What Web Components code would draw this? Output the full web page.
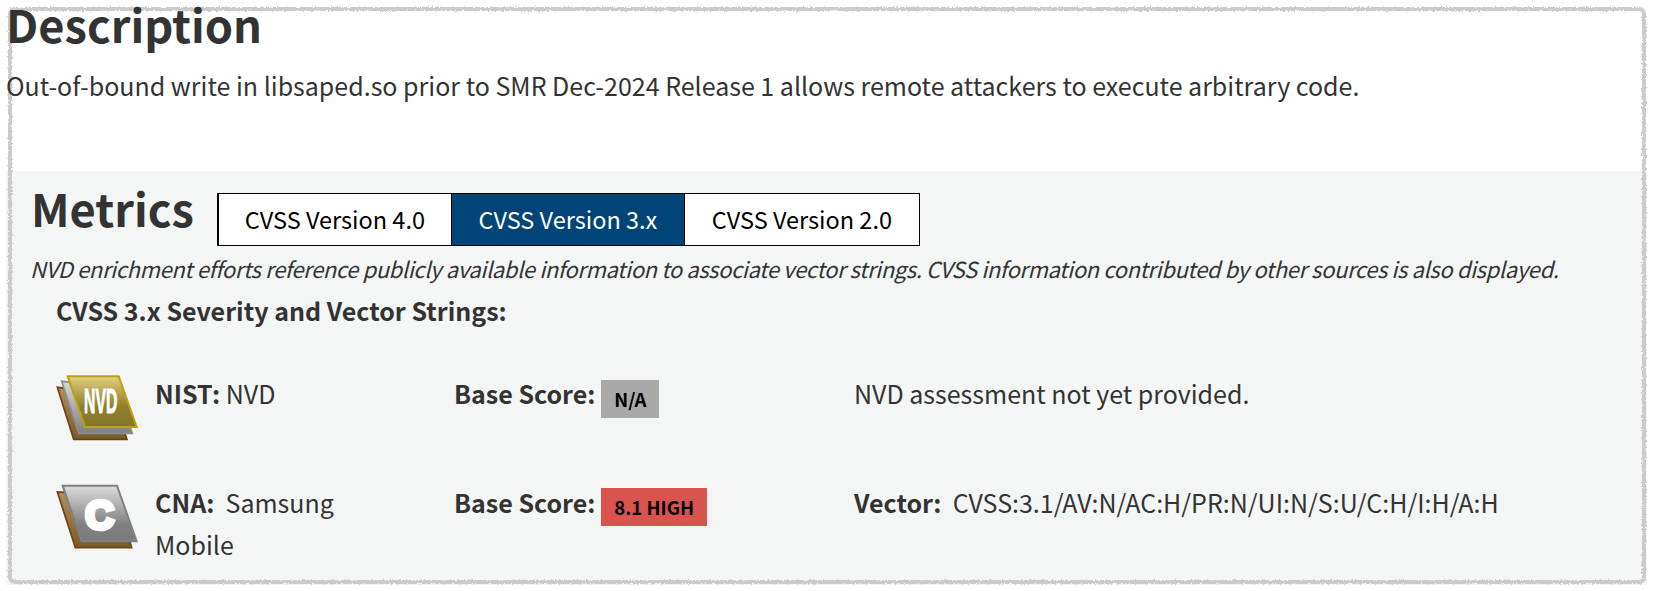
<!DOCTYPE html>
<html lang="en">
<head>
<meta charset="utf-8">
<title>Description and Metrics</title>
<style>
	html, body { background: #fff; }
	body { margin: 5px 0 0 6px; font-family: "Noto Sans CJK SC", "Liberation Sans", sans-serif; color: #333; overflow: hidden; }
</style>
</head>
<body>
<torn-frame>
	<text-section>
		<section-title>Description</section-title>
		<p-text>Out-of-bound write in libsaped.so prior to SMR Dec-2024 Release 1 allows remote attackers to execute arbitrary code.</p-text>
	</text-section>
	<metrics-panel>
		<severity-row>
			<source-icon slot="icon" kind="nvd"></source-icon>
			<span slot="source"><b>NIST:</b> NVD</span>
			<score-badge slot="score" level="na">N/A</score-badge>
			<span slot="detail">NVD assessment not yet provided.</span>
		</severity-row>
		<severity-row>
			<source-icon slot="icon" kind="cna"></source-icon>
			<span slot="source"><b>CNA:</b>&nbsp; Samsung Mobile</span>
			<score-badge slot="score" level="high">8.1 HIGH</score-badge>
			<span slot="detail"><b>Vector:</b>&nbsp; CVSS:3.1/AV:N/AC:H/PR:N/UI:N/S:U/C:H/I:H/A:H</span>
		</severity-row>
	</metrics-panel>
</torn-frame>

<script>
window.customElements.define('torn-frame', class extends HTMLElement {
	constructor(){
		super();
		let shadowRoot = this.attachShadow({mode: 'open'});
		shadowRoot.innerHTML = `
			<style>
				:host { display: block; position: relative; width: 1641px; height: 580px; }
				.edge {
					position: absolute; inset: 2px 1px 1px 2px;
					border: 4px solid #cbcbcb; border-radius: 7px;
					filter: url(#rough); pointer-events: none;
				}
			</style>
			<svg width="0" height="0" style="position:absolute">
				<filter id="rough" x="-1%" y="-2%" width="102%" height="104%">
					<feTurbulence type="fractalNoise" baseFrequency="0.55" numOctaves="2" seed="4"/>
					<feDisplacementMap in="SourceGraphic" scale="3.5" result="torn"/>
					<feGaussianBlur in="torn" stdDeviation="0.45"/>
				</filter>
			</svg>
			<slot></slot>
			<div class="edge"></div>
		`;
	}
});

window.customElements.define('section-title', class extends HTMLElement {
	constructor(){
		super();
		let shadowRoot = this.attachShadow({mode: 'open'});
		shadowRoot.innerHTML = `
			<style>
				:host { display: block; position: relative; z-index: 1; font-size: 45.2px; font-weight: 700; line-height: 46px; color: #333; margin-top: -4px; }
			</style>
			<slot></slot>
		`;
	}
});

window.customElements.define('p-text', class extends HTMLElement {
	constructor(){
		super();
		let shadowRoot = this.attachShadow({mode: 'open'});
		shadowRoot.innerHTML = `
			<style>
				:host { display: block; position: relative; z-index: 1; font-size: 25px; line-height: 36px; color: #333; }
			</style>
			<slot></slot>
		`;
	}
});

window.customElements.define('text-section', class extends HTMLElement {
	constructor(){
		super();
		let shadowRoot = this.attachShadow({mode: 'open'});
		shadowRoot.innerHTML = `
			<style>
				:host { display: flex; flex-direction: column; gap: 20px; height: 166px; box-sizing: border-box; }
			</style>
			<slot></slot>
		`;
	}
});

window.customElements.define('version-tabs', class extends HTMLElement {
	constructor(){
		super();
		let shadowRoot = this.attachShadow({mode: 'open'});
		let active = this.dataset.active;
		let names = ['CVSS Version 4.0', 'CVSS Version 3.x', 'CVSS Version 2.0'];
		shadowRoot.innerHTML = `
			<style>
				:host { display: flex; border: 1px solid #000; background: #fff; height: 51px; margin-top: 12px; }
				button {
					all: unset; display: flex; align-items: center; justify-content: center;
					width: 233px; font-size: 23.5px; color: #000; border-left: 1px solid #000;
					box-sizing: border-box; padding-bottom: 1px;
				}
				button:first-child { border-left: 0; width: 233px; }
				button:last-child { width: 235px; }
				button.on { background: #004478; color: #fff; }
			</style>
			${names.map(n => `<button class="${n === active ? 'on' : ''}">${n}</button>`).join('')}
		`;
	}
});

window.customElements.define('metrics-panel', class extends HTMLElement {
	constructor(){
		super();
		let shadowRoot = this.attachShadow({mode: 'open'});
		shadowRoot.innerHTML = `
			<style>
				:host { display: block; background: #f4f6f6; height: 414px; padding: 10px 0 0 25px; box-sizing: border-box; color: #333; }
				.head { display: flex; align-items: flex-start; gap: 23px; }
				h3 { margin: 0; font-size: 45.2px; font-weight: 700; line-height: 54px; color: #333; }
				em { display: block; font-size: 22px; letter-spacing: -0.39px; line-height: 30px; margin: 7px 0 0 -1px; white-space: nowrap; }
				h4 { margin: 9px 0 0 25px; font-size: 25px; font-weight: 700; line-height: 36px; }
				.rows { display: flex; flex-direction: column; gap: 24px; margin: 44px 0 0 25px; }
			</style>
			<div class="head">
				<h3>Metrics</h3>
				<version-tabs data-active="CVSS Version 3.x"></version-tabs>
			</div>
			<em>NVD enrichment efforts reference publicly available information to associate vector strings. CVSS information contributed by other sources is also displayed.</em>
			<h4>CVSS 3.x Severity and Vector Strings:</h4>
			<div class="rows"><slot></slot></div>
		`;
	}
});

window.customElements.define('severity-row', class extends HTMLElement {
	constructor(){
		super();
		let shadowRoot = this.attachShadow({mode: 'open'});
		shadowRoot.innerHTML = `
			<style>
				:host {
					display: grid; grid-template-columns: 99px 299px 400px 1fr;
					font-size: 25px; line-height: 42px; color: #333; min-height: 85px;
				}
				.score { display: flex; align-items: flex-start; gap: 6px; }
				.score b { font-weight: 700; }
				.source { width: 240px; }
				::slotted(span) { display: block; }
			</style>
			<div><slot name="icon"></slot></div>
			<div class="source"><slot name="source"></slot></div>
			<div class="score"><b>Base Score:</b><slot name="score"></slot></div>
			<div><slot name="detail"></slot></div>
		`;
	}
});

window.customElements.define('score-badge', class extends HTMLElement {
	constructor(){
		super();
		let shadowRoot = this.attachShadow({mode: 'open'});
		shadowRoot.innerHTML = `
			<style>
				:host {
					display: block; height: 38px; line-height: 38px; padding: 0 13px; margin-top: 7px;
					font-size: 18.6px; font-weight: 700; color: #000;
				}
				:host([level="na"]) { background: #a9a9a9; margin-top: 8px; padding: 0 12.5px 0 13px; }
				:host([level="high"]) { background: #d9534f; }
			</style>
			<slot></slot>
		`;
	}
});

window.customElements.define('source-icon', class extends HTMLElement {
	constructor(){
		super();
		let shadowRoot = this.attachShadow({mode: 'open'});
		let kind = this.getAttribute('kind');
		let brown = `<linearGradient id="b" x1="0" y1="0" x2="0" y2="1"><stop offset="0" stop-color="#b08f5c"/><stop offset="1" stop-color="#7a5a26"/></linearGradient>`;
		let art = kind === 'nvd' ? `
			<defs>${brown}
				<linearGradient id="s" x1="0" y1="0" x2="0" y2="1"><stop offset="0" stop-color="#d8d8d8"/><stop offset="1" stop-color="#7f7f7f"/></linearGradient>
				<linearGradient id="f" x1="0" y1="0" x2="0" y2="1"><stop offset="0" stop-color="#e0cf7c"/><stop offset="0.6" stop-color="#8f7f2d"/><stop offset="1" stop-color="#85762a"/></linearGradient>
			</defs>
			<polygon points="37,70 86,226 246,226 200,90" fill="url(#b)" stroke="#6e4212" stroke-width="5"/>
			<polygon points="50,52 101,208 262,208 215,70" fill="url(#s)" stroke="#8d8d8d" stroke-width="5"/>
			<polygon points="68,37 221,37 275,189 120,189" fill="url(#f)" stroke="#bda20b" stroke-width="6"/>
			<text x="167" y="147" text-anchor="middle" textLength="100" lengthAdjust="spacingAndGlyphs" font-family="Liberation Sans Narrow, Liberation Sans" font-weight="700" font-size="104" fill="#fff" stroke="#fff" stroke-width="3">NVD</text>
		` : `
			<defs>${brown}
				<linearGradient id="g" x1="0" y1="0" x2="0" y2="1"><stop offset="0" stop-color="#dcdcdc"/><stop offset="0.7" stop-color="#808080"/><stop offset="1" stop-color="#7a7a7a"/></linearGradient>
			</defs>
			<polygon points="37,51 91,218 260,218 215,60" fill="url(#b)" stroke="#6e4212" stroke-width="5"/>
			<polygon points="53,32 216,32 275,199 110,199" fill="url(#g)" stroke="#808080" stroke-width="6"/>
			<text x="164" y="161" text-anchor="middle" textLength="86" lengthAdjust="spacingAndGlyphs" font-family="Liberation Sans Narrow, Liberation Sans" font-weight="700" font-size="124" fill="#fff" stroke="#fff" stroke-width="14">C</text>
		`;
		shadowRoot.innerHTML = `
			<style>
				:host { display: block; width: 100px; height: 90px; margin: -8px 0 0 -11px; }
				:host([kind="cna"]) { margin-top: -6px; }
				svg { display: block; }
			</style>
			<svg width="100" height="90" viewBox="0 0 300 270">${art}</svg>
		`;
	}
});
</script>
</body>
</html>
